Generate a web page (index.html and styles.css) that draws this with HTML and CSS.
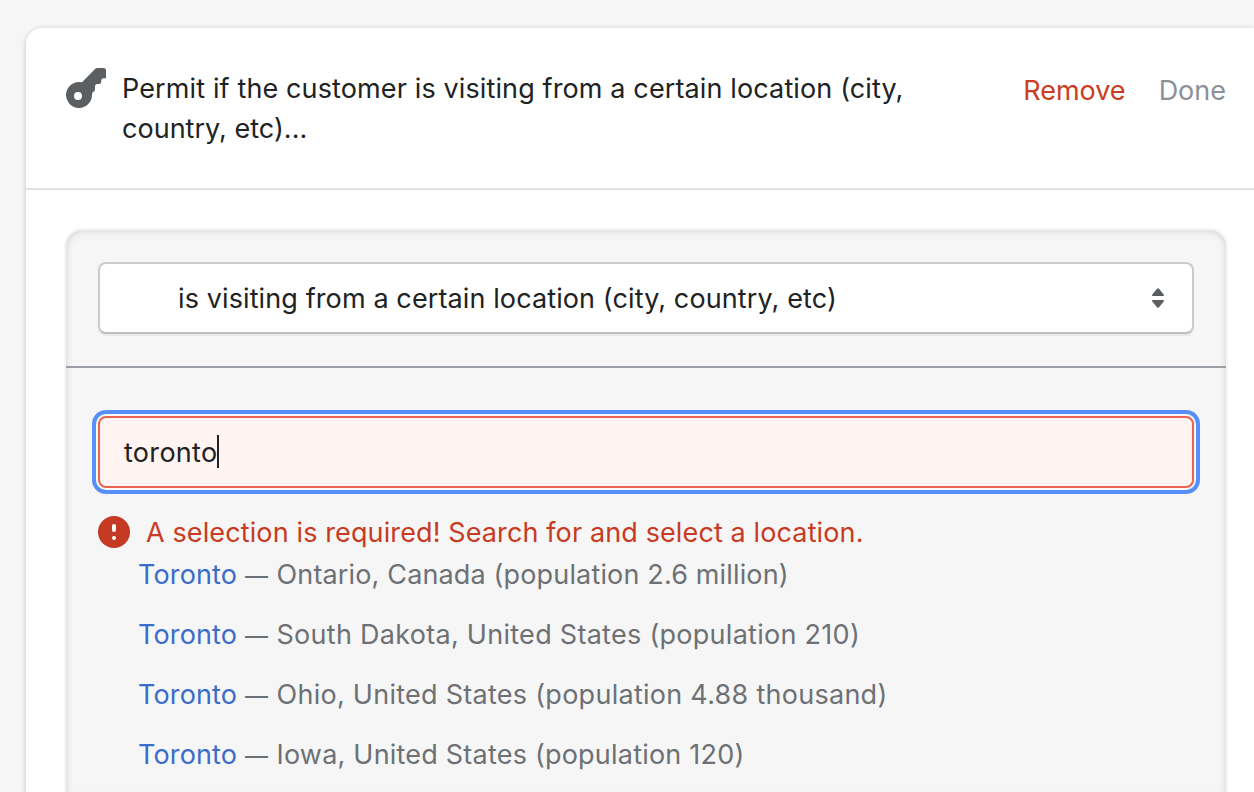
FILE: index.html
```html
<!DOCTYPE html>
<html lang="en">
<head>
<meta charset="utf-8">
<title>Location rule</title>
<link rel="stylesheet" href="styles.css">
</head>
<body>
<main class="card">
  <header class="card-header">
    <svg class="key" viewBox="0 0 40 40" aria-hidden="true"><path fill-rule="evenodd" d="M29 1Q30 0 32 0H37.500Q40 0 40 2.500V10.300H37Q35.200 10.600 35.200 12.500V14Q35.200 16 33 16H31Q29 16.200 29 18.500V21.500Q28.800 23.500 27 24Q26 24.500 26 27A13 13 0 1 1 16 14.300ZM12 24A4 4 0 1 0 12 32A4 4 0 1 0 12 24Z"/></svg>
    <h1 class="title">Permit if the customer is visiting from a certain location (city,<br><span class="title-end">country, etc)...</span></h1>
    <nav class="actions"><a class="remove">Remove</a><a class="done">Done</a></nav>
  </header>
  <section class="panel">
    <div class="condition">
      <div class="select"><span class="select-text">is visiting from a certain location (city, country, etc)</span>
        <svg class="arrows" viewBox="0 0 12 20" aria-hidden="true"><path d="M.5 8Q-.3 7.500.3 6.500L5 .700Q6 -.300 7 .700L11.700 6.500Q12.300 7.500 11.500 8ZM.5 12Q-.3 12.500.3 13.500L5 19.300Q6 20.300 7 19.300L11.700 13.500Q12.300 12.500 11.500 12Z"/></svg>
      </div>
    </div>
    <div class="search">
      <div class="input"><span class="input-text">toronto</span><span class="caret"></span></div>
      <div class="error">
        <svg class="alert" viewBox="0 0 32 32" aria-hidden="true"><circle cx="16" cy="16" r="16" fill="#c53a22"/><rect x="14" y="8" width="4" height="8" rx="2" fill="#fff"/><circle cx="16" cy="22" r="2" fill="#fff"/></svg>
        <span class="error-text">A selection is required! Search for and select a location.</span>
      </div>
      <ul class="results">
        <li class="result"><a class="city">Toronto</a><span class="dash">—</span><span class="place ontario">Ontario, Canada (population 2.6 million)</span></li>
        <li class="result"><a class="city">Toronto</a><span class="dash">—</span><span class="place dakota">South Dakota, United States (population 210)</span></li>
        <li class="result"><a class="city">Toronto</a><span class="dash">—</span><span class="place ohio">Ohio, United States (population 4.88 thousand)</span></li>
        <li class="result"><a class="city">Toronto</a><span class="dash">—</span><span class="place iowa">Iowa, United States (population 120)</span></li>
      </ul>
    </div>
  </section>
</main>
</body>
</html>
```
FILE: styles.css
```css
* { box-sizing: border-box; }
html, body { margin: 0; height: 100%; }
body { overflow: hidden; padding: 28px 0 0 26px; background: #f6f6f6; color: #202223; font: 400 27px/40px Inter, "Liberation Sans", sans-serif; white-space: nowrap; }
.card { display: flex; flex-direction: column; height: 100%; background: #fff; border-top-left-radius: 16px; box-shadow: 0 0 4px rgba(23,24,24,.08), 0 2px 6px rgba(0,0,0,.14); }
.card-header { display: flex; flex: none; align-items: flex-start; height: 162px; padding: 40px 28px 0 40px; border-bottom: 2px solid #e1e1e2; }
.key { width: 40px; height: 40px; flex: none; fill: #5c5f62; }
.title { margin: 1px 0 0 16px; font: inherit; letter-spacing: .125px; }
.title-end { letter-spacing: .02px; }
.actions { display: flex; gap: 33px; margin: 3px 0 0 auto; }
.remove { color: #cb3c22; }
.done { color: #8c9196; }
.panel { width: 1160px; flex: 1; min-height: 0; margin: 40px 0 0 40px; border-radius: 16px 16px 0 0; background: #f6f6f6; box-shadow: inset 8px 0 8px -8px rgba(0,0,0,.09), inset -8px 0 8px -8px rgba(0,0,0,.09), inset 0 4px 8px -2px rgba(0,0,0,.1), 0 0 0 2px rgba(0,0,0,.035); }
.condition { height: 138px; padding: 32px 32px 0; border-bottom: 2px solid #999fa4; }
.select { display: flex; align-items: center; justify-content: space-between; height: 72px; padding: 0 28px 0 78px; border: 2px solid #c9cccf; border-bottom-color: #babfc3; border-radius: 8px; background: #fff; box-shadow: 0 2px 0 rgba(0,0,0,.05); }
.select-text { padding-top: 2px; letter-spacing: .11px; }
.arrows { width: 12px; height: 20px; fill: #5c5f62; }
.search { padding: 48px 32px 0; }
.input { display: flex; align-items: center; height: 72px; padding-left: 24px; border: 2px solid #e96350; border-radius: 8px; background: #fff4f2; box-shadow: 0 0 0 2px #f9f9f9, 0 0 0 6px #578ff8; }
.input-text { padding-top: 2px; letter-spacing: .3px; }
.caret { width: 2px; height: 33px; margin-bottom: 1px; background: #202223; }
.error { display: flex; align-items: center; gap: 16px; height: 32px; margin-top: 28px; color: #c83a22; }
.error-text { padding-top: 2px; letter-spacing: .12px; }
.alert { width: 32px; height: 32px; }
.results { display: grid; gap: 20px; margin: 7px 0 0; padding: 0 0 0 40px; list-style: none; }
.result { display: flex; align-items: baseline; height: 40px; color: #6d7175; }
.city { width: 107px; color: #3b6cc9; letter-spacing: .15px; }
.dash { width: 31.5px; font-size: 23px; }
.ontario { letter-spacing: .15px; }
.dakota { letter-spacing: .28px; }
.ohio { letter-spacing: .27px; }
.iowa { letter-spacing: .21px; }
```
